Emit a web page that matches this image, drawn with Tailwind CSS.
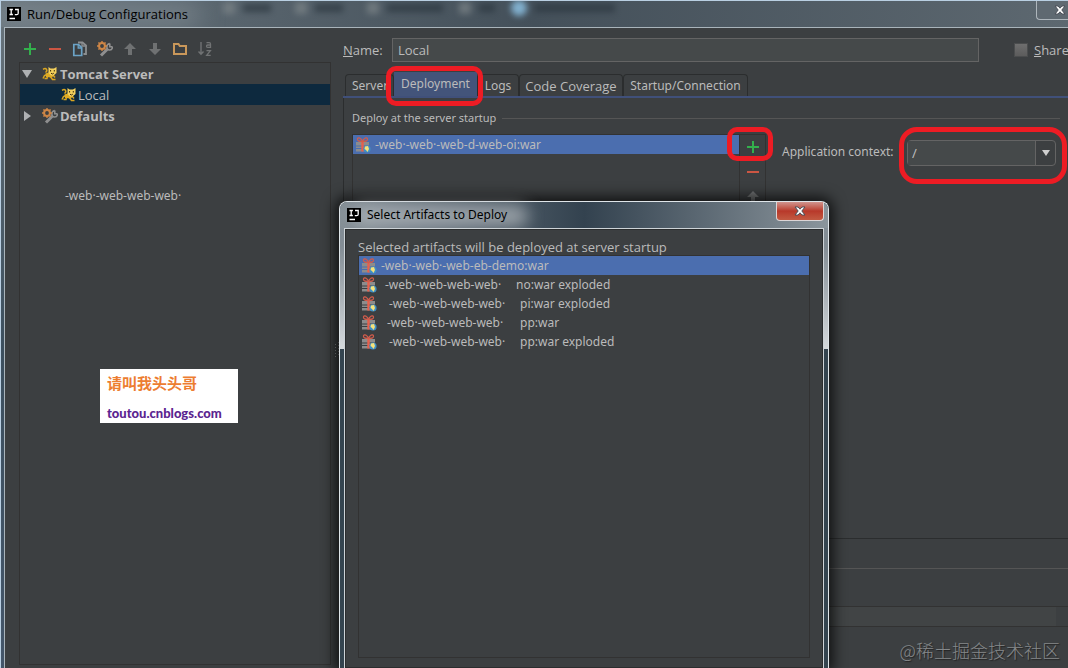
<!DOCTYPE html>
<html lang="en">
<head>
<meta charset="utf-8">
<title>Run/Debug Configurations</title>
<script src="https://cdn.jsdelivr.net/npm/@tailwindcss/browser@4"></script>
</head>
<body class="h-screen overflow-hidden bg-[#3c3f41] font-['Noto_Sans','Noto_Sans_CJK_SC',sans-serif] text-[12px] leading-4 text-[#bbbbbb]">
<svg class="hidden" aria-hidden="true">
  <symbol id="ij" viewBox="0 0 14 14"><rect width="14" height="14" fill="#000"/><path d="M2.5 2.5h3.4M4.2 2.5v5M2.5 7.5h3.4M8 2.5h3.2v3.7q0 1.5-1.5 1.5H7.8M2.5 11.5h5.5" stroke="#fff" stroke-width="1.3" fill="none"/></symbol>
  <symbol id="plus" viewBox="0 0 12 12"><path d="M6 0v12M0 6h12" stroke="#33b04c" stroke-width="2"/></symbol>
  <symbol id="minus" viewBox="0 0 12 12"><path d="M0 6h12" stroke="#cc5643" stroke-width="2"/></symbol>
  <symbol id="copy" viewBox="0 0 16 16"><path d="M6 1.500h4.500l3.500 3v8.500H11.500" fill="none" stroke="#8c8f91" stroke-width="1.800"/><path d="M10 1v4h4.500" fill="none" stroke="#8c8f91" stroke-width="1.300"/><path d="M1.800 3.500h4.700l3.200 3.200v7.800H1.800z" fill="#3c3f41" stroke="#6ba3c6" stroke-width="1.700"/><path d="M6.200 3.500V7h3.500" fill="none" stroke="#6ba3c6" stroke-width="1.300"/></symbol>
  <symbol id="gear" viewBox="0 0 16 16"><path d="M4 14.500 10.500 8" stroke="#8f8f8f" stroke-width="3"/><path d="M12.800 2.500Q9.800 3 9.800 6q.4 3.200 3 3 2.400-.2 2.700-3M12.800 2.500v3.300h2.800" fill="none" stroke="#8f8f8f" stroke-width="1.600"/><circle cx="5" cy="5" r="2.900" fill="none" stroke="#ce8646" stroke-width="2"/><path d="M5 0v2M5 8v2M0 5h2M8 5h2M1.400 1.400l1.400 1.400M7.200 7.200l1.400 1.400M1.400 8.600l1.400-1.400M7.200 2.800l1.400-1.400" stroke="#ce8646" stroke-width="1.400"/></symbol>
  <symbol id="up" viewBox="0 0 12 12"><path d="M6 0l6 6H8v6H4V6H0z" fill="#6f7172"/></symbol>
  <symbol id="down" viewBox="0 0 12 12"><path d="M6 12l6-6H8V0H4v6H0z" fill="#6f7172"/></symbol>
  <symbol id="folder" viewBox="0 0 14 12"><path d="M1 11V1h4.5l1.3 2H13v8z" fill="none" stroke="#c9975a" stroke-width="2"/></symbol>
  <symbol id="sort" viewBox="0 0 14 16"><path d="M3 1v12M.5 10.500 3 13.300l2.500-2.800" fill="none" stroke="#717374" stroke-width="1.400"/><path d="M8.500 1.700h2.800q1.200 0 1.200 1.200v3.500H9.700Q8.500 6.300 8.500 5.200 8.500 4 9.700 4h2.800M8.500 9.600H12.400L8.700 14.300h4" fill="none" stroke="#717374" stroke-width="1.300"/></symbol>
  <symbol id="cat" viewBox="0 0 16 16"><path d="M1 3.300q2.500-1.500 3.500.2T3.500 6.500M6 8 2.500 9.500 1 12.500M5.500 9.500 5 12.500H2.500M8 10l2.500 3.500h3M11 9l2 2.500" fill="none" stroke="#d9a520" stroke-width="1.500"/><path d="M3.500 7.500 8 6l4 3-2 2.500-6-.5z" fill="#e0ac24"/><path d="M6.500 1l2 1.500h3.500L14.500 1v6L11.500 9.500H9L6.500 7z" fill="#f3d05c"/><path d="M8.600 4v1.500M12.300 4v1.500M9 7.200l1.400.8 1.400-.8" stroke="#3a2c10" stroke-width="1" fill="none"/></symbol>
  <symbol id="gift" viewBox="0 0 16 16"><path d="M1 5h13v3.500H1zM1 9.500h13V11H1zM1 12h13v2.500H1z" fill="#8c8c8c"/><path d="M6.300 4.500h2.400v10H6.300z" fill="#e8604c"/><path d="M7.500 4.300Q2 4.500 2.500 2 3 .2 5 1.200 6.500 2 7.500 4.300 8.500 2 10 1.200 12 .2 12.500 2 13 4.500 7.500 4.300z" fill="none" stroke="#d05c4c" stroke-width="1.300"/><circle cx="12" cy="12" r="3.600" fill="#3e8fc6"/><path d="M10 9.500l3-.5 1 3-1.500 3-1.500-2-1.500-1z" fill="#f6e27a"/></symbol>
  <symbol id="x" viewBox="0 0 12 10"><path d="M1 1h3l2 2.200L8 1h3L7.800 5 11 9H8L6 6.800 4 9H1l3.200-4z" fill="#fff" stroke="#4a4f58" stroke-width="1"/></symbol>
</svg>

<div class="relative flex h-full flex-col overflow-hidden border-l border-t border-[#b9cfe2]">
  <header class="relative flex h-[26px] shrink-0 items-center gap-1.5 overflow-hidden bg-linear-to-r from-[#68747c] via-[#44505a] to-[#5d6870] pl-1.5">
    <div class="absolute inset-0 flex items-center gap-2 pb-3 pl-[222px] opacity-70 blur-[3px]" aria-hidden="true">
      <i class="size-3 bg-[#7c8488]"></i><i class="mr-4 h-2 w-7 bg-[#2b363f]"></i>
      <i class="size-3 bg-[#7c8488]"></i><i class="mr-4 h-2 w-7 bg-[#2b363f]"></i>
      <i class="size-3 bg-[#7c8488]"></i><i class="mr-2 h-2 w-14 bg-[#2b363f]"></i>
      <i class="size-3 bg-[#7c8488]"></i><i class="mr-2 h-2 w-4 bg-[#2b363f]"></i>
      <i class="size-4 rounded-full bg-[#9bd8ff]"></i><i class="h-2 w-20 bg-[#2b363f]"></i>
    </div>
    <div class="absolute -left-2 top-1 h-5 w-52 rounded-full bg-[#8d989f]/60 blur-md"></div>
    <svg class="relative size-3.5"><use href="#ij"/></svg>
    <h1 class="relative font-['Open_Sans',sans-serif] text-[13px] leading-4 text-black">Run/Debug Configurations</h1>
    <button aria-label="Close window" class="absolute right-0 -top-px flex h-5 w-8 items-center justify-end rounded-bl border border-r-0 border-[#aeb6bc] bg-[#5f6971] pr-0.5"><svg class="h-2.5 w-3"><use href="#x"/></svg></button>
  </header>

  <div class="flex min-h-0 flex-1">
    <div class="w-1 shrink-0 border-r border-[#a9b4bb] bg-linear-to-b from-[#66727a] via-[#3c4f5e] to-[#44566a]"></div>
    <div class="flex min-w-0 flex-1 border-t border-[#a9b4bb] pl-3.5">

      <aside class="flex w-[312px] shrink-0 flex-col pb-[3px]">
        <div class="flex h-[34px] shrink-0 items-center gap-[9px] pl-[3px] pt-2">
          <button aria-label="Add" class="flex size-4 items-center justify-center"><svg class="size-3"><use href="#plus"/></svg></button>
          <button aria-label="Remove" class="flex size-4 items-center justify-center"><svg class="size-3"><use href="#minus"/></svg></button>
          <button aria-label="Copy" class="flex size-4 items-center justify-center"><svg class="size-4"><use href="#copy"/></svg></button>
          <button aria-label="Edit defaults" class="flex size-4 items-center justify-center"><svg class="size-4"><use href="#gear"/></svg></button>
          <button aria-label="Move up" class="flex size-4 items-center justify-center"><svg class="size-3"><use href="#up"/></svg></button>
          <button aria-label="Move down" class="flex size-4 items-center justify-center"><svg class="size-3"><use href="#down"/></svg></button>
          <button aria-label="New folder" class="flex size-4 items-center justify-center"><svg class="h-3 w-3.5"><use href="#folder"/></svg></button>
          <button aria-label="Sort" class="flex size-4 items-center justify-center"><svg class="h-4 w-3.5"><use href="#sort"/></svg></button>
        </div>
        <div class="min-h-0 flex-1 border border-[#323232]">
          <ul class="font-['Open_Sans',sans-serif] text-[13px] leading-4">
            <li class="flex h-[21px] items-center font-bold"><svg class="ml-0.5 mr-2.5 size-2.5" viewBox="0 0 10 10"><path d="M0 1h10L5 9z" fill="#afb1b3"/></svg><svg class="mr-0.5 size-4"><use href="#cat"/></svg>Tomcat Server</li>
            <li class="flex h-[21px] items-center bg-[#0d293e] pl-[41px]"><svg class="mr-px size-4"><use href="#cat"/></svg>Local</li>
            <li class="flex h-[21px] items-center font-bold"><svg class="ml-0.5 mr-2.5 size-2.5" viewBox="0 0 10 10"><path d="M2 0v10l7-5z" fill="#afb1b3"/></svg><svg class="mr-0.5 size-4"><use href="#gear"/></svg>Defaults</li>
          </ul>
          <p class="ml-[45px] mt-[62px]">-web·-web-web-web·</p>
          <div class="ml-20 mt-[165px] flex h-[54px] w-[138px] flex-col justify-between bg-white px-[7px] pb-0.5 pt-1.5">
            <span class="text-[15px] font-bold leading-4 text-[#ed7d31]">请叫我头头哥</span>
            <a href="#" class="font-['Lato',sans-serif] text-[13px] font-black leading-4 text-[#5b2590]">toutou.cnblogs.com</a>
          </div>
        </div>
      </aside>

      <div class="flex w-3 shrink-0 items-center justify-center pt-1">
        <svg class="h-4 w-1" viewBox="0 0 4 16"><path d="M.5 2v14M3.500 0v14" stroke="#85888a" stroke-dasharray="1 2"/></svg>
      </div>

      <main class="flex min-w-0 flex-1 flex-col">
        <div class="flex h-11 shrink-0 items-center font-['Open_Sans',sans-serif] text-[13px]">
          <label for="name" class="w-[49px] shrink-0"><u>N</u>ame:</label>
          <input id="name" value="Local" class="h-6 min-w-0 flex-1 border border-[#646464] bg-[#45494a] px-[5px]">
          <label class="ml-[35px] flex w-[54px] shrink-0 items-center gap-1.5 overflow-hidden"><input type="checkbox" class="size-3.5 shrink-0 appearance-none border border-[#4b4d4e] bg-linear-to-b from-[#6e6e6e] to-[#5c5c5c]"><span><u>S</u>hare</span></label>
        </div>
        <nav class="flex h-[26px] shrink-0 items-end border-b-2 border-[#40507a] pl-0.5">
          <button class="h-[22px] w-[49px] rounded-t border border-b-0 border-[#2b2d2e] pl-1.5 text-left">Server</button>
          <button class="relative z-10 h-6 w-[83px] bg-[#43547a]">Deployment<span class="pointer-events-none absolute -bottom-2.5 -left-2 -right-1.5 -top-1.5 rounded-[10px] border-5 border-[#ed1c24]"></span></button>
          <button class="h-[22px] w-[42px] rounded-t border border-b-0 border-[#2b2d2e]">Logs</button>
          <button class="h-[22px] w-[104px] rounded-t border border-b-0 border-[#2b2d2e] font-['Open_Sans',sans-serif] text-[13px] leading-4">Code Coverage</button>
          <button class="h-[22px] w-[125px] rounded-t border border-b-0 border-[#2b2d2e]">Startup/Connection</button>
        </nav>
        <section class="flex min-h-0 flex-1 flex-col border-b border-l border-[#2b2d2e] pl-2">
          <div class="flex h-9 shrink-0 items-center gap-1.5 pr-2 pt-1 text-[11px]">Deploy at the server startup<hr class="flex-1 border-[#555555]"></div>
          <div class="flex min-h-0 flex-1">
            <ul class="min-w-0 flex-1 border border-[#323232]">
              <li class="flex h-[19px] items-center bg-[#4b6eaf] pl-0.5"><svg class="mr-1 size-4"><use href="#gift"/></svg>-web·-web·-web-d-web-oi:war</li>
            </ul>
            <div class="flex w-[26px] shrink-0 flex-col items-center gap-[13px] border-r border-t border-[#323232] pt-1.5">
              <button aria-label="Add artifact" class="relative"><svg class="size-3"><use href="#plus"/></svg><span class="pointer-events-none absolute -left-5 -right-3.5 -top-3.5 -bottom-2 rounded-[10px] border-5 border-[#ed1c24]"></span></button>
              <button aria-label="Remove artifact"><svg class="size-3"><use href="#minus"/></svg></button>
              <button aria-label="Move artifact up"><svg class="size-3"><use href="#up"/></svg></button>
            </div>
            <div class="ml-4 mr-3 flex shrink-0 items-start pt-1.5">
              <label for="ctx" class="w-[125px] pt-1">Application context:</label>
              <div class="relative flex h-[26px] w-[149px] rounded-sm border border-[#646464]">
                <input id="ctx" value="/" class="min-w-0 flex-1 bg-[#45494a] px-1 text-[13px]">
                <button aria-label="Show contexts" class="flex w-5 items-center justify-center border-l border-[#646464]"><svg class="h-1.5 w-2" viewBox="0 0 8 6"><path d="M0 0h8L4 6z" fill="#cfcfcf"/></svg></button>
                <span class="pointer-events-none absolute -bottom-[19px] -left-[9px] -right-3 -top-3.5 rounded-[18px] border-5 border-[#ed1c24]"></span>
              </div>
            </div>
          </div>
        </section>
        <div class="h-[30px] shrink-0 border-b border-[#555555]"></div>
        <div class="h-[38px] shrink-0 border-b border-[#323232]"></div>
        <div class="h-5 shrink-0 border-b border-[#323232] pr-3"><div class="h-full bg-[#414445]"></div></div>
        <footer class="flex h-[41px] shrink-0 items-center justify-end pr-2 pt-1 font-['Noto_Sans_CJK_SC',sans-serif] text-[18px] font-light leading-6 text-[#85888a] text-shadow-[1px_1px_1px_#222]">@稀土掘金技术社区</footer>
      </main>
    </div>
  </div>

  <div role="dialog" aria-labelledby="dlg" class="absolute bottom-0 left-[338px] top-[200px] z-20 flex w-[490px] flex-col rounded-t-lg border border-b-0 border-[#dfe5e9] bg-[#34444f] shadow-[0_0_14px_4px_rgba(0,0,0,0.75)]">
    <div class="absolute inset-x-0 top-0 h-[147px] rounded-t-lg bg-linear-to-b from-[#838d95] from-30% to-[#d5d9dc]"></div>
    <header class="relative flex h-[26px] shrink-0 items-center gap-1.5 rounded-t-lg bg-linear-to-r from-[#858f96] via-[#33424f] via-50% to-[#8b959c] pl-[7px]">
      <div class="absolute left-3 top-1 h-5 w-44 rounded-full bg-[#b0b6bb]/80 blur-sm"></div>
      <svg class="relative size-3.5"><use href="#ij"/></svg>
      <h2 id="dlg" class="relative text-[12px] text-black">Select Artifacts to Deploy</h2>
      <button aria-label="Close dialog" class="absolute right-1 top-0 flex h-[19px] w-12 items-center justify-center rounded-b border border-t-0 border-[#dcd5d6] bg-linear-to-b from-[#cf938d] via-[#b8382a] via-50% to-[#c25a42]"><svg class="h-2.5 w-3"><use href="#x"/></svg></button>
    </header>
    <div class="relative mx-1 flex min-h-0 flex-1 flex-col border border-b-0 border-[#cdd3d7] bg-[#3c3f41] px-[13px] pb-2.5 pt-2.5 shadow-[inset_0_0_0_1px_#2b2d2e]">
      <p class="font-['Open_Sans',sans-serif] text-[13px] leading-4">Selected artifacts will be deployed at server startup</p>
      <ul class="min-h-0 flex-1 border border-[#323232]">
        <li class="flex h-[19px] items-center bg-[#4b6eaf] pl-0.5"><svg class="mr-1 size-4"><use href="#gift"/></svg>-web·-web·-web-eb-demo:war</li>
        <li class="flex h-[19px] items-center pl-0.5"><svg class="mr-2 size-4"><use href="#gift"/></svg><span class="w-[131px]">-web·-web-web-web·</span>no:war exploded</li>
        <li class="flex h-[19px] items-center pl-0.5"><svg class="mr-3 size-4"><use href="#gift"/></svg><span class="w-[131px]">-web·-web-web-web·</span>pi:war exploded</li>
        <li class="flex h-[19px] items-center pl-0.5"><svg class="mr-2.5 size-4"><use href="#gift"/></svg><span class="w-[133px]">-web·-web-web-web·</span>pp:war</li>
        <li class="flex h-[19px] items-center pl-0.5"><svg class="mr-3 size-4"><use href="#gift"/></svg><span class="w-[131px]">-web·-web-web-web·</span>pp:war exploded</li>
      </ul>
    </div>
  </div>
</div>
</body>
</html>
